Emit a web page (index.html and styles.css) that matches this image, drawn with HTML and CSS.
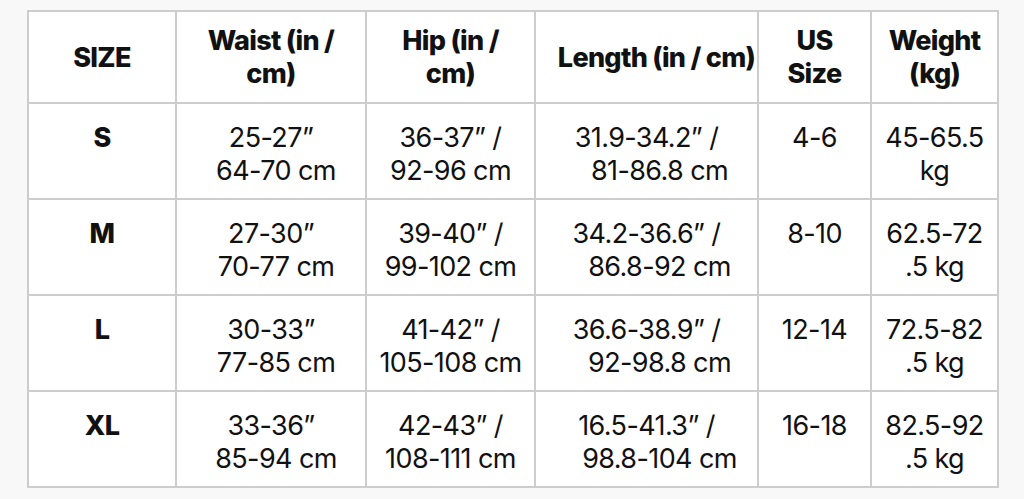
FILE: index.html
```html
<!DOCTYPE html>
<html>
<head>
<meta charset="utf-8">
<link rel="stylesheet" href="styles.css">
</head>
<body>
<table class="chart">
  <colgroup>
    <col class="c-size"><col class="c-waist"><col class="c-hip"><col class="c-len"><col class="c-us"><col class="c-wt">
  </colgroup>
  <thead>
    <tr>
      <th>SIZE</th>
      <th>Waist (in /<br>cm)</th>
      <th>Hip (in /<br>cm)</th>
      <th class="len-h">Length (in / cm)</th>
      <th>US<br>Size</th>
      <th>Weight<br>(kg)</th>
    </tr>
  </thead>
  <tbody>
    <tr>
      <td class="sz">S</td>
      <td><span class="l">25-27”</span><span class="l s2">64-70 cm</span></td>
      <td><span class="l">36-37” /</span><span class="l">92-96 cm</span></td>
      <td class="len"><span class="l">31.9-34.2” /</span><span class="l s3">81-86.8 cm</span></td>
      <td>4-6</td>
      <td><span class="l">45-65.5</span><span class="l">kg</span></td>
    </tr>
    <tr>
      <td class="sz">M</td>
      <td><span class="l">27-30”</span><span class="l s2">70-77 cm</span></td>
      <td><span class="l">39-40” /</span><span class="l">99-102 cm</span></td>
      <td class="len"><span class="l">34.2-36.6” /</span><span class="l s3">86.8-92 cm</span></td>
      <td>8-10</td>
      <td class="wt"><span class="l">62.5-72</span><span class="l">.5 kg</span></td>
    </tr>
    <tr>
      <td class="sz">L</td>
      <td><span class="l">30-33”</span><span class="l s2">77-85 cm</span></td>
      <td><span class="l">41-42” /</span><span class="l">105-108 cm</span></td>
      <td class="len"><span class="l">36.6-38.9” /</span><span class="l s3">92-98.8 cm</span></td>
      <td>12-14</td>
      <td class="wt"><span class="l">72.5-82</span><span class="l">.5 kg</span></td>
    </tr>
    <tr>
      <td class="sz">XL</td>
      <td><span class="l">33-36”</span><span class="l s2">85-94 cm</span></td>
      <td><span class="l">42-43” /</span><span class="l">108-111 cm</span></td>
      <td class="len"><span class="l">16.5-41.3” /</span><span class="l s3">98.8-104 cm</span></td>
      <td>16-18</td>
      <td class="wt"><span class="l">82.5-92</span><span class="l">.5 kg</span></td>
    </tr>
  </tbody>
</table>
</body>
</html>
```

FILE: styles.css
```css
html, body {
  margin: 0;
  padding: 0;
  background: #f8f8f8;
}
body {
  padding: 10px 0 0 27px;
  font-family: Inter, "Liberation Sans", sans-serif;
  color: #111;
}
.chart {
  border-collapse: collapse;
  table-layout: fixed;
  width: 972px;
  background: #fff;
}
.c-size { width: 148px; }
.c-waist { width: 190px; }
.c-hip { width: 169px; }
.c-len { width: 223px; }
.c-us { width: 113px; }
.c-wt { width: 127px; }
.chart th, .chart td {
  border: 2px solid #cdcdcd;
  text-align: center;
  padding: 0;
  overflow: visible;
  white-space: nowrap;
}
.chart th {
  height: 90px;
  font-size: 27px;
  line-height: 33px;
  font-weight: 800;
  letter-spacing: -0.7px;
  vertical-align: middle;
}
.chart th.len-h {
  padding-left: 20px;
}
.chart td {
  height: 96px;
  box-sizing: border-box;
  font-size: 27px;
  line-height: 33px;
  font-weight: 400;
  letter-spacing: -0.6px;
  vertical-align: top;
  padding-top: 17px;
}
.chart td.sz {
  font-weight: 800;
}
.l {
  display: block;
}
.s2 {
  padding-left: 10px;
}
.len {
  padding-left: 14px;
}
.s3 {
  padding-left: 26px;
}
.wt {
  padding-left: 8px;
}
```
